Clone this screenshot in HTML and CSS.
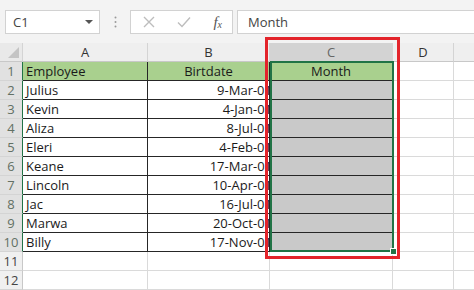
FILE: index.html
```html
<!DOCTYPE html>
<html lang="en">
<head>
    <meta charset="UTF-8">
    <title>Month column</title>
    <link rel="stylesheet" href="styles.css">
</head>
<body>
    <div class="toolbar">
        <div class="name-box">
            <span>C1</span>
            <svg class="caret" width="8" height="5" viewBox="0 0 8 5"><path d="M0 0 L8 0 L4 4 Z" fill="#555"/></svg>
        </div>
        <div class="grip">
            <svg width="3" height="12" viewBox="0 0 3 12"><circle cx="1.5" cy="1.5" r="1" fill="#999"/><circle cx="1.5" cy="6" r="1" fill="#999"/><circle cx="1.5" cy="10.5" r="1" fill="#999"/></svg>
        </div>
        <div class="fx-buttons">
            <svg width="12" height="12" viewBox="0 0 12 12"><path d="M1 1 L11 11 M11 1 L1 11" stroke="#bdbdbd" stroke-width="1.4"/></svg>
            <svg width="14" height="12" viewBox="0 0 14 12"><path d="M1 6.5 L5 10.5 L13 1.5" stroke="#bdbdbd" stroke-width="1.4" fill="none"/></svg>
            <span class="fx"><i>f</i><sub>x</sub></span>
        </div>
        <div class="formula">Month</div>
    </div>

    <div class="sheet">
        <div class="grid">
            <div class="corner"></div>
            <div class="col-head">A</div>
            <div class="col-head">B</div>
            <div class="col-head picked">C</div>
            <div class="col-head">D</div>
            <div class="col-head last"></div>
        </div>
        <div class="grid" id="rows"></div>

        <div class="selection"><span class="handle"></span></div>
        <div class="highlight"></div>
    </div>

    <script>
        const people = [
            ['Julius', '9-Mar-01'],
            ['Kevin', '4-Jan-01'],
            ['Aliza', '8-Jul-01'],
            ['Eleri', '4-Feb-01'],
            ['Keane', '17-Mar-01'],
            ['Lincoln', '10-Apr-01'],
            ['Jac', '16-Jul-01'],
            ['Marwa', '20-Oct-01'],
            ['Billy', '17-Nov-01']
        ];

        let html = '';
        html += '<div class="row-head picked">1</div>';
        html += '<div class="cell table head-cell">Employee</div>';
        html += '<div class="cell table head-cell center">Birtdate</div>';
        html += '<div class="cell table head-cell center month">Month</div>';
        html += '<div class="cell"></div><div class="cell last"></div>';

        people.forEach((p, i) => {
            html += `<div class="row-head picked">${i + 2}</div>`;
            html += `<div class="cell table">${p[0]}</div>`;
            html += `<div class="cell table right"><span>${p[1]}</span></div>`;
            html += '<div class="cell table empty"></div>';
            html += '<div class="cell"></div><div class="cell last"></div>';
        });

        [11, 12].forEach(n => {
            html += `<div class="row-head">${n}</div>`;
            html += '<div class="cell"></div><div class="cell"></div><div class="cell"></div><div class="cell"></div><div class="cell last"></div>';
        });

        document.getElementById('rows').innerHTML = html;
    </script>
</body>
</html>
```

FILE: styles.css
```css
body {
    margin: 0;
    width: 474px;
    height: 290px;
    overflow: hidden;
    background: #fff;
    font-family: "Open Sans", sans-serif;
    color: #1a1a1a;
}
.toolbar {
    height: 43px;
    box-sizing: border-box;
    padding-top: 10px;
    background: #f3f3f3;
    display: flex;
    align-items: flex-start;
}
.name-box {
    margin-left: 5px;
    width: 95px;
    height: 24px;
    box-sizing: border-box;
    background: #fff;
    border: 1px solid #d2d2d2;
    display: flex;
    align-items: center;
    justify-content: space-between;
    padding: 0 6px 0 7px;
    font-size: 13px;
    color: #444;
}
.grip {
    width: 30px;
    height: 24px;
    display: flex;
    align-items: center;
    justify-content: center;
}
.fx-buttons {
    width: 103px;
    height: 24px;
    box-sizing: border-box;
    background: #fff;
    border: 1px solid #d2d2d2;
    display: flex;
    align-items: center;
    justify-content: space-between;
    padding: 0 10px 0 12px;
}
.fx {
    font-family: "Liberation Serif", serif;
    font-size: 15px;
    color: #555;
    line-height: 1;
}
.fx sub {
    font-size: 10px;
    font-style: italic;
    vertical-align: -1px;
}
.formula {
    margin-left: 4px;
    flex: 1;
    height: 24px;
    box-sizing: border-box;
    background: #fff;
    border: 1px solid #d2d2d2;
    border-right: none;
    padding-left: 10px;
    font-size: 13px;
    line-height: 22px;
    color: #444;
}
.sheet {
    position: relative;
}
.grid {
    display: grid;
    grid-template-columns: 23px 125px 122px 123px 61px 1fr;
    grid-auto-rows: 19px;
}
.corner {
    background: #e9e9e9;
    border-right: 1px solid #d4d4d4;
    border-bottom: 1px solid #c8c8c8;
    position: relative;
}
.corner::after {
    content: "";
    position: absolute;
    right: 3px;
    bottom: 3px;
    border-left: 11px solid transparent;
    border-bottom: 11px solid #c4c4c4;
}
.col-head {
    background: #efefef;
    border-right: 1px solid #d4d4d4;
    border-bottom: 1px solid #c8c8c8;
    box-sizing: border-box;
    text-align: center;
    font-size: 13px;
    line-height: 18px;
    color: #333;
}
.col-head.picked {
    background: #d3d3d3;
    color: #666;
}
.col-head.last, .cell.last {
    border-right: none;
}
.row-head {
    background: #f0f0f0;
    border-bottom: 1px solid #d4d4d4;
    border-right: 1px solid #c8c8c8;
    box-sizing: border-box;
    text-align: center;
    font-size: 13px;
    line-height: 18px;
    color: #444;
}
.row-head.picked {
    background: #e1e1e1;
    color: #627064;
    border-right: 1px solid #217346;
}
.cell {
    border-right: 1px solid #dadada;
    border-bottom: 1px solid #dadada;
    box-sizing: border-box;
    font-size: 13px;
    line-height: 18px;
    padding: 0 3px;
    white-space: nowrap;
    overflow: hidden;
}
.cell.table {
    border-right: 1px solid #262626;
    border-bottom: 1px solid #262626;
}
.head-cell {
    background: #a9d08e;
}
.center {
    text-align: center;
}
.right {
    text-align: right;
    padding-right: 0;
}
.right span {
    margin-right: -3px;
}
.empty {
    background: #c9c9c9;
}
.selection {
    position: absolute;
    left: 270px;
    top: 18px;
    width: 124px;
    height: 191px;
    box-sizing: border-box;
    border: 2px solid #217346;
}
.handle {
    position: absolute;
    right: -5px;
    bottom: -5px;
    width: 5px;
    height: 5px;
    background: #217346;
    border: 1px solid #fff;
}
.highlight {
    position: absolute;
    left: 265px;
    top: -6px;
    width: 135px;
    height: 222px;
    box-sizing: border-box;
    border: 3px solid #e3242b;
}
```
